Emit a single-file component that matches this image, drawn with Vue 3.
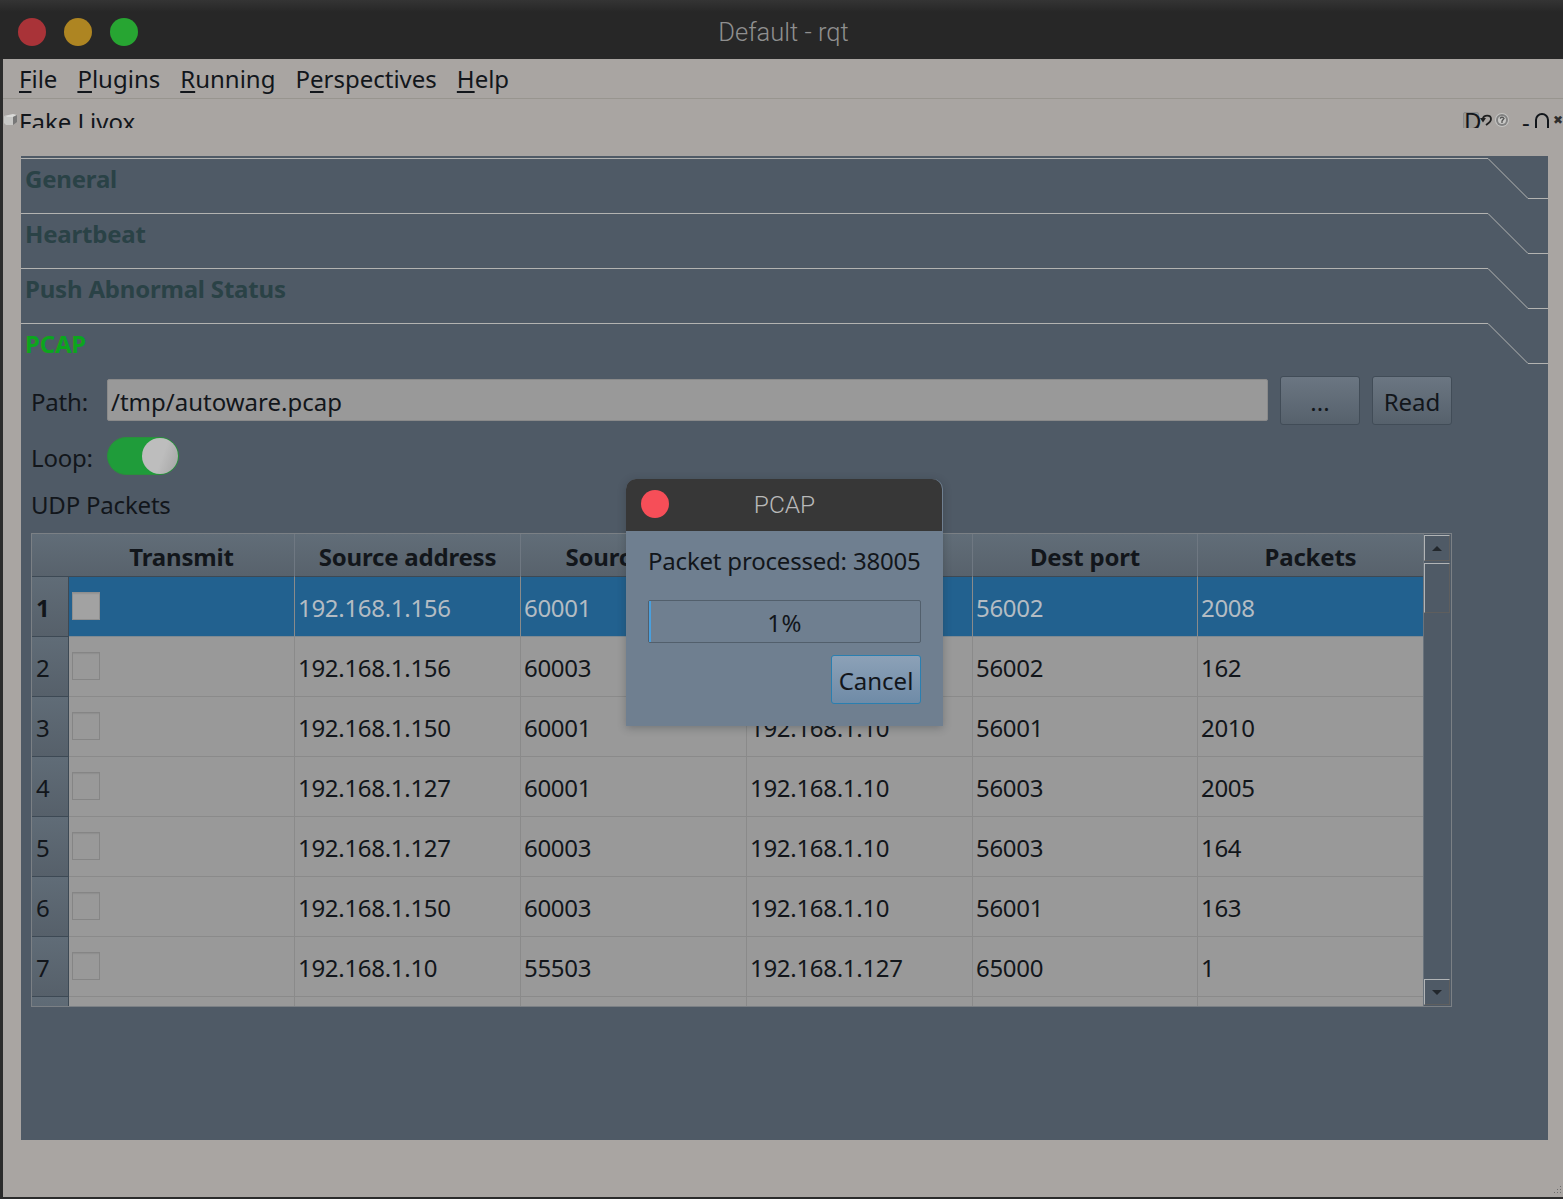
<script setup>
const menus = [
  { pre: '', key: 'F', post: 'ile' },
  { pre: '', key: 'P', post: 'lugins' },
  { pre: '', key: 'R', post: 'unning' },
  { pre: 'P', key: 'e', post: 'rspectives' },
  { pre: '', key: 'H', post: 'elp' }
]
const headers = ['Transmit', 'Source address', 'Source port', 'Dest address', 'Dest port', 'Packets']
const rows = [
  ['192.168.1.156', '60001', '192.168.1.10', '56002', '2008'],
  ['192.168.1.156', '60003', '192.168.1.10', '56002', '162'],
  ['192.168.1.150', '60001', '192.168.1.10', '56001', '2010'],
  ['192.168.1.127', '60001', '192.168.1.10', '56003', '2005'],
  ['192.168.1.127', '60003', '192.168.1.10', '56003', '164'],
  ['192.168.1.150', '60003', '192.168.1.10', '56001', '163'],
  ['192.168.1.10', '55503', '192.168.1.127', '65000', '1'],
  ['', '', '', '', '']
]
const collapsed = ['General', 'Heartbeat', 'Push Abnormal Status']
</script>

<template>
  <div class="screen">
    <header class="titlebar">
      <span class="light red"></span>
      <span class="light amber"></span>
      <span class="light green"></span>
      <span class="win-title">Default - rqt</span>
    </header>
    <div class="body">
      <nav class="menubar">
        <span v-for="m in menus" :key="m.key + m.post">{{ m.pre }}<u>{{ m.key }}</u>{{ m.post }}</span>
      </nav>
      <div class="dock-title">
        <svg class="cube" width="14" height="13" viewBox="0 0 14 13">
          <path d="M0 3 L9 1 L13 2 L9 4 L3 4 Z" fill="#dadad8" />
          <path d="M0 3 L3 4 L9 4 L9 12 L2 12 L0 10 Z" fill="#c8c8c6" />
          <path d="M9 4 L13 2 L13 9 L9 12 Z" fill="#787878" />
        </svg>
        <span class="dock-name">Fake Livox</span>
        <span class="dock-tools">
          <span class="tool-d">D</span>
          <svg class="tool-undo" width="12" height="12" viewBox="0 0 12 12">
            <path d="M2.800 5 C3.500 0.500 11 0.500 11 5 C11 8 8 9.500 6 11" fill="none" stroke="#1f1f1f" stroke-width="1.800" />
            <path d="M0 4 L6 4 L3 8.500 Z" fill="#1f1f1f" />
          </svg>
          <svg class="tool-help" width="14" height="14" viewBox="0 0 14 14">
            <circle cx="7" cy="7" r="7" fill="#c4c4c2" />
            <circle cx="7" cy="7" r="6" fill="#828282" />
            <circle cx="7" cy="7" r="4" fill="#c8c8c6" />
            <path d="M5 5.500 Q7 3 9 5.500 L7 8 L7 10" fill="none" stroke="#555" stroke-width="1.300" />
          </svg>
          <span class="tool-min">-</span>
          <span class="tool-max"></span>
          <span class="tool-close">✖</span>
        </span>
      </div>

      <main class="panel">
        <section v-for="name in collapsed" :key="name" class="section">
          <svg class="edge" width="1527" height="42" viewBox="0 0 1527 42">
            <polyline points="0,0.5 1467,0.5 1507,40.5 1527,40.5" />
          </svg>
          <h2 class="section-name">{{ name }}</h2>
        </section>

        <section class="section open">
          <svg class="edge" width="1527" height="42" viewBox="0 0 1527 42">
            <polyline points="0,0.5 1467,0.5 1507,40.5 1527,40.5" />
          </svg>
          <h2 class="section-name active">PCAP</h2>

          <div class="content">
            <div class="path-row">
              <label class="lbl path-lbl">Path:</label>
              <div class="input">/tmp/autoware.pcap</div>
              <button class="btn">...</button>
              <button class="btn">Read</button>
            </div>
            <div class="loop-row">
              <label class="lbl loop-lbl">Loop:</label>
              <span class="toggle"><span class="knob"></span></span>
            </div>
            <div class="lbl udp">UDP Packets</div>

            <div class="table">
              <div class="table-main">
                <div class="thead">
                  <div class="corner"></div>
                  <div v-for="h in headers" :key="h" class="th">{{ h }}</div>
                </div>
                <div v-for="(row, i) in rows" :key="i" class="tr" :class="{ selected: i === 0 }">
                  <div class="rowhead">{{ i + 1 }}</div>
                  <div class="td check"><span class="box"></span></div>
                  <div v-for="(v, j) in row" :key="j" class="td">{{ v }}</div>
                </div>
              </div>
              <div class="scrollbar">
                <div class="sb-btn"><span class="tri up"></span></div>
                <div class="sb-thumb"></div>
                <div class="sb-space"></div>
                <div class="sb-btn"><span class="tri down"></span></div>
              </div>
            </div>
          </div>
        </section>
      </main>

      <svg class="grip" width="9" height="9" viewBox="0 0 9 9">
        <g fill="#6e6e6e">
          <rect x="7" y="0" width="1" height="1" />
          <rect x="4" y="3" width="1" height="1" />
          <rect x="7" y="3" width="1" height="1" />
          <rect x="1" y="6" width="1" height="1" />
          <rect x="4" y="6" width="1" height="1" />
          <rect x="7" y="6" width="1" height="1" />
        </g>
      </svg>
    </div>

    <div class="dialog">
      <div class="dlg-title">
        <span class="dlg-close"></span>
        <span class="dlg-name">PCAP</span>
      </div>
      <div class="dlg-body">
        <div class="dlg-text">Packet processed: 38005</div>
        <div class="progress"><span class="fill"></span><span class="pct">1%</span></div>
        <div class="dlg-actions"><button class="cancel">Cancel</button></div>
      </div>
    </div>
  </div>
</template>

<style>
html, body { margin: 0; background: #272727; }
</style>

<style scoped>
.screen {
  position: relative;
  width: 1563px;
  height: 1199px;
  overflow: hidden;
  background: #2b2b2b;
  font-family: "Noto Sans", sans-serif;
  font-size: 24px;
  letter-spacing: 0;
  color: #12161b;
  display: flex;
  flex-direction: column;
}
.titlebar {
  position: relative;
  height: 59px;
  flex: none;
  display: flex;
  align-items: center;
  gap: 18px;
  padding: 5px 0 0 18px;
  box-sizing: border-box;
  background: linear-gradient(#343434, #272727 12px);
}
.light { width: 28px; height: 28px; border-radius: 50%; flex: none; }
.red { background: #a93338; }
.amber { background: #ae8522; }
.green { background: #27a532; }
.win-title {
  position: absolute;
  left: 4px;
  right: 0;
  text-align: center;
  font-family: Roboto, sans-serif;
  font-weight: 300;
  font-size: 25.5px;
  color: #8f8f8f;
}
.body {
  position: relative;
  flex: none;
  height: 1138px;
  margin-left: 3px;
  background: #a9a5a2;
  display: flex;
  flex-direction: column;
}
.menubar {
  height: 39px;
  flex: none;
  border-bottom: 1px solid #98958f;
  display: flex;
  align-items: center;
  gap: 20px;
  padding-left: 16px;
  line-height: 42px;
}
.menubar u { text-decoration-thickness: 2px; text-underline-offset: 3px; }
.dock-title {
  height: 29px;
  flex: none;
  overflow: hidden;
  display: flex;
  align-items: flex-start;
  position: relative;
  padding-left: 2px;
}
.cube { margin: 14px 1px 0 -1px; flex: none; }
.dock-name { line-height: 46px; }
.dock-tools {
  margin-left: auto;
  display: flex;
  align-items: flex-start;
}
.tool-d {
  width: 16px;
  height: 20px;
  margin-top: 13px;
  box-sizing: border-box;
  background: #9a9894;
  border: 1px solid #8a8a8a;
  line-height: 15px;
  text-align: center;
  border-radius: 2px;
}
.tool-undo { margin: 15px 0 0 1px; flex: none; }
.tool-help { margin: 14px 0 0 3px; flex: none; }
.tool-min { margin-left: 13px; line-height: 46px; width: 8px; }
.tool-max {
  width: 14px;
  height: 30px;
  margin: 14px 0 0 5px;
  box-sizing: border-box;
  border: 2px solid #12161b;
  border-radius: 7px;
}
.tool-close { font-size: 12px; width: 10px; margin: 15px 0 0 4px; color: #2d2d2d; line-height: 12px; }

.panel {
  margin: 28px 15px 0 18px;
  width: 1527px;
  height: 984px;
  flex: none;
  background: #4f5a66;
  padding-top: 2px;
  box-sizing: border-box;
}
.section { position: relative; height: 55px; }
.section.open { height: auto; }
.edge { position: absolute; left: 0; top: 0; display: block; }
.edge polyline { fill: none; stroke: #b3b3b1; stroke-width: 1; }
.section-name {
  margin: 0;
  padding-left: 4px;
  height: 53px;
  box-sizing: border-box;
  font-size: 24px;
  font-weight: 700;
  line-height: 42px;
  letter-spacing: -0.2px;
  color: #2a4246;
}
.section-name.active { color: #0ca51e; }
.content { padding-left: 10px; }
.path-row { display: flex; align-items: center; height: 49px; }
.lbl { display: block; letter-spacing: -0.2px; }
.path-lbl { width: 76px; line-height: 34px; padding-top: 2px; }
.input {
  width: 1161px;
  height: 42px;
  margin-top: -1px;
  box-sizing: border-box;
  background: #999;
  border: 1px solid #8a8a8a;
  border-radius: 2px;
  padding-left: 3px;
  line-height: 44px;
}
.btn {
  font: inherit;
  color: inherit;
  width: 80px;
  height: 49px;
  margin-left: 12px;
  padding: 2px 0 0;
  background: linear-gradient(#6b7682, #56616c);
  border: 1px solid #414c57;
  border-radius: 3px;
}
.loop-row { display: flex; align-items: center; height: 38px; margin-top: 12px; }
.loop-lbl { width: 76px; line-height: 34px; padding-top: 4px; }
.toggle {
  width: 72px;
  height: 38px;
  box-sizing: border-box;
  border: 1px solid #2a8f3c;
  border-radius: 19px;
  background: #1f9c3a;
  display: flex;
  justify-content: flex-end;
}
.knob { width: 36px; height: 36px; border-radius: 50%; background: linear-gradient(110deg, #bdbdbd 55%, #a4a4a4); }
.udp { height: 58px; line-height: 60px; }

.table {
  width: 1421px;
  height: 474px;
  box-sizing: border-box;
  border: 1px solid #7b8085;
  display: flex;
  background: #4f5a66;
}
.table-main { width: 1391px; overflow: hidden; flex: none; background: #999; }
.thead, .tr {
  display: grid;
  grid-template-columns: 37px 226px 226px 226px 226px 225px 225px;
}
.thead {
  height: 43px;
  box-sizing: border-box;
  background: linear-gradient(#616d78, #58626c);
  border-bottom: 1px solid #3d4954;
}
.th {
  text-align: center;
  font-weight: 700;
  line-height: 45px;
  letter-spacing: -0.2px;
  border-right: 1px solid #6f7882;
}
.th:last-child { border-right: 0; }
.tr { height: 60px; }
.rowhead {
  background: linear-gradient(#606c77, #56606a);
  border-right: 1px solid #3d4954;
  border-bottom: 1px solid #3d4954;
  padding-left: 4px;
  line-height: 62px;
  height: 60px;
  box-sizing: border-box;
  overflow: hidden;
}
.td {
  border-right: 1px solid #8a8a8a;
  border-bottom: 1px solid #8a8a8a;
  padding-left: 3px;
  line-height: 62px;
  height: 60px;
  box-sizing: border-box;
  letter-spacing: -0.3px;
  white-space: nowrap;
  overflow: hidden;
}
.td:last-child { border-right: 0; }
.box {
  display: block;
  width: 28px;
  height: 28px;
  margin-top: 15px;
  box-sizing: border-box;
  border: 1px solid #858585;
  background: #999;
  box-shadow: inset 0 2px 2px -2px #777;
}
.selected .td { background: #22618f; color: #b4bcc3; border-bottom-color: #7f8a92; }
.selected .rowhead { font-weight: 700; }
.selected .box { background: #a2a2a2; border-color: #8f8f8f; }

.scrollbar {
  width: 28px;
  flex: none;
  display: flex;
  flex-direction: column;
  border-left: 1px solid #6a737c;
  box-sizing: border-box;
  padding: 1px 0;
  gap: 2px;
}
.sb-btn, .sb-thumb {
  width: 26px;
  box-sizing: border-box;
  border: 1px solid;
  border-color: #b1b4b6 #5e5e5e #5e5e5e #b1b4b6;
}
.sb-btn { height: 26px; display: flex; align-items: center; justify-content: center; }
.sb-thumb { height: 50px; }
.sb-space { flex: 1; }
.tri { width: 0; height: 0; border-left: 5px solid transparent; border-right: 5px solid transparent; }
.tri.up { border-bottom: 5px solid #22272c; }
.tri.down { border-top: 5px solid #22272c; }

.grip { position: absolute; right: 1px; bottom: 2px; }

.dialog {
  position: absolute;
  left: 626px;
  top: 479px;
  width: 317px;
  height: 247px;
  box-shadow: 0 2px 8px rgba(30, 36, 42, 0.3);
  border-radius: 10px 10px 0 0;
  background: #6f7f90;
  display: flex;
  flex-direction: column;
}
.dlg-title {
  position: relative;
  height: 52px;
  margin-right: 1px;
  flex: none;
  background: #373737;
  border-radius: 10px 10px 0 0;
  display: flex;
  align-items: center;
  padding: 0 0 2px 15px;
  box-sizing: border-box;
}
.dlg-close { width: 28px; height: 28px; border-radius: 50%; background: #f64e58; }
.dlg-name {
  position: absolute;
  left: 1px;
  right: 0;
  text-align: center;
  font-family: Roboto, sans-serif;
  font-weight: 300;
  font-size: 24.5px;
  color: #b9b9b9;
}
.dlg-body { padding: 0 22px; display: flex; flex-direction: column; }
.dlg-text { height: 69px; line-height: 60px; white-space: nowrap; letter-spacing: -0.2px; }
.progress {
  position: relative;
  height: 43px;
  box-sizing: border-box;
  border: 1px solid #525f6c;
  border-radius: 2px;
  text-align: center;
  line-height: 44px;
  letter-spacing: 0.5px;
}
.fill { position: absolute; left: 0; top: 0; bottom: 0; width: 2px; background: #4a9fdc; }
.dlg-actions { display: flex; justify-content: flex-end; margin-top: 12px; }
.cancel {
  font: inherit;
  color: inherit;
  width: 90px;
  height: 49px;
  padding: 2px 0 0;
  background: linear-gradient(#8ca1b7, #6f8ba7);
  border: 1px solid #2a7fb0;
  border-radius: 3px;
}
</style>
